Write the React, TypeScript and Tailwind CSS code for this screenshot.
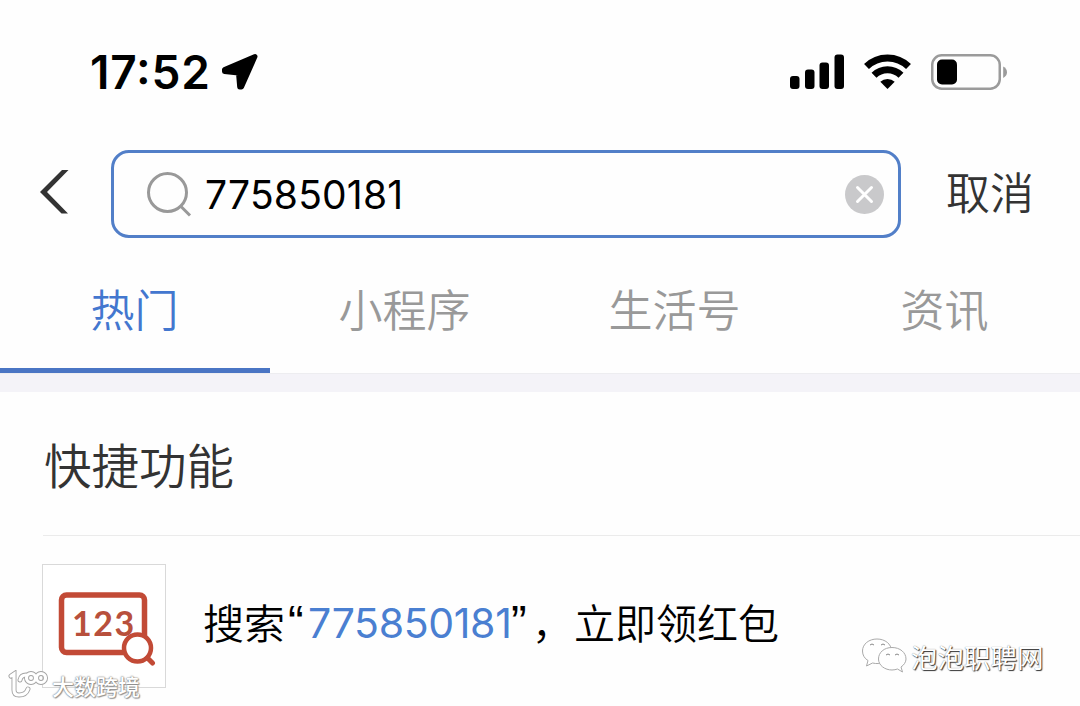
import { useState } from "react";

const TABS = ["热门", "小程序", "生活号", "资讯"];

const CJK = "font-['Noto_Sans_CJK_SC',sans-serif]";

function StatusBar() {
  return (
    <div className="flex h-[144px] items-center justify-between pl-[90px] pr-[73px]">
      <div className="flex items-center">
        <span className="w-[131px] whitespace-nowrap text-[46px] leading-none font-semibold tracking-[0.8px] text-black [font-feature-settings:'case']">17:52</span>
        <svg width="38" height="38" viewBox="0 0 38 38" className="text-black">
          <path
            d="M3.500 16.500 34 3.500 20.500 34H18.700L17.500 20 3.500 18.500Z"
            fill="currentColor" stroke="currentColor" strokeWidth="5" strokeLinejoin="round"
          />
        </svg>
      </div>
      <div className="flex items-center">
        <svg width="54" height="36" viewBox="0 0 54 36" fill="#000" className="mr-[20px]">
          <rect x="0" y="22" width="9.500" height="13" rx="3" />
          <rect x="15" y="15.500" width="9.500" height="19.500" rx="3" />
          <rect x="29.500" y="8.500" width="9.500" height="26.500" rx="3" />
          <rect x="44.500" y="0.500" width="9.500" height="34.500" rx="3" />
        </svg>
        <svg width="47" height="36" viewBox="0 0 47 36" fill="none" stroke="#000" strokeWidth="7" className="mr-[20px]">
          <path d="M2.500 12.500A30 30 0 0 1 44.500 12.500" />
          <path d="M10 21.300A19.200 19.200 0 0 1 37 21.300" />
          <path d="M16.300 27.800A10.500 10.500 0 0 1 30.700 27.800L23.500 35Z" fill="#000" stroke="none" />
        </svg>
        <svg width="76" height="36" viewBox="0 0 76 36">
          <rect x="1.250" y="1.250" width="67.500" height="33.500" rx="9.500" fill="none" stroke="#9b9b9b" strokeWidth="2.500" />
          <rect x="6" y="5.500" width="20" height="25" rx="5" fill="#000" />
          <path d="M72.200 12.500Q76 14.500 76 18.300Q76 22 72.200 24Z" fill="#9b9b9b" />
        </svg>
      </div>
    </div>
  );
}

function SearchBar({ value, onChange }: { value: string; onChange: (v: string) => void }) {
  return (
    <div className="flex h-[100px] items-center">
      <button className="mb-[5px] ml-[40px] mr-[42px] shrink-0" aria-label="返回">
        <svg width="29" height="44" viewBox="0 0 29 44" fill="#333">
          <path d="M0 22 22 0H28.500L7 22 28 43.500H21.500Z" />
        </svg>
      </button>
      <label className="flex h-[88px] w-[790px] shrink-0 items-center rounded-[18px] border-[3px] border-[#527fc8] pl-[31px] pr-[14px]">
        <svg width="48" height="48" viewBox="0 0 48 48" fill="none" stroke="#999" strokeWidth="3" className="mr-[12px] shrink-0">
          <circle cx="22.500" cy="22.500" r="19" />
          <path d="M35.500 36 45 45.500" />
        </svg>
        <input
          value={value}
          onChange={(e) => onChange(e.target.value)}
          className="min-w-0 flex-1 text-[39px] leading-none tracking-[0.2px] text-black outline-none"
        />
        <button onClick={() => onChange("")} className="shrink-0" aria-label="清除">
          <svg width="39" height="39" viewBox="0 0 39 39">
            <circle cx="19.500" cy="19.500" r="19.500" fill="#c9c9cb" />
            <path d="M12.500 12.500 26.500 26.500M26.500 12.500 12.500 26.500" stroke="#fff" strokeWidth="3" strokeLinecap="round" />
          </svg>
        </button>
      </label>
      <button className={`${CJK} mb-[6px] ml-[45px] shrink-0 text-[44px] leading-none font-[350] text-[#333]`}>取消</button>
    </div>
  );
}

function NumberSearchIcon() {
  return (
    <svg width="98" height="78" viewBox="0 0 98 78" fill="none" stroke="#c24a36">
      <rect x="3.500" y="7" width="83" height="57.500" rx="5" strokeWidth="5.500" />
      <text x="14" y="48" fill="#b8503c" stroke="none" fontSize="34" fontWeight="700" letterSpacing="1.500" fontFamily="Lato, sans-serif">123</text>
      <circle cx="79.500" cy="60" r="13.500" fill="#fff" strokeWidth="4.500" />
      <path d="M89.500 70 94.500 75" strokeWidth="5" strokeLinecap="round" />
    </svg>
  );
}

export default function App() {
  const [query, setQuery] = useState("775850181");
  const [active, setActive] = useState(0);

  return (
    <div className="relative h-[706px] w-[1080px] overflow-hidden bg-[#fefefe] font-[Inter,'Noto_Sans_CJK_SC',sans-serif]">
      <StatusBar />
      <SearchBar value={query} onChange={setQuery} />

      <div className="flex h-[129px]">
        {TABS.map((tab, i) => (
          <button
            key={tab}
            onClick={() => setActive(i)}
            className={`${CJK} flex-1 border-b-[5px] pt-[3px] pr-px text-[44px] leading-none font-[350] ${
              i === active ? "border-[#4a75c4] text-[#4377cf]" : "border-transparent text-[#999]"
            }`}
          >
            {tab}
          </button>
        ))}
      </div>
      <div className="h-[19px] border-t border-[#ededf0] bg-[#f4f3f8]" />

      <h2 className={`${CJK} flex h-[143px] items-center pl-[44px] text-[47.5px] leading-none font-[350] text-[#333]`}>快捷功能</h2>
      <div className="ml-[43px] h-px bg-[#ebebeb]" />

      <div className="flex pl-[42px] pt-[28px]">
        <div className="flex h-[124px] w-[124px] items-center justify-center border border-[#d9d9d9] bg-white pt-[2px] pl-[5px]">
          <NumberSearchIcon />
        </div>
        <p className={`${CJK} ml-[37px] flex h-[115px] items-center whitespace-nowrap text-[41px] leading-none font-[350] text-black`}>
          <span className="w-[85px]">搜索</span>
          <span className="w-[20px] font-['Liberation_Sans'] text-[47px]">“</span>
          <span className="w-[203px] pt-[3px] font-[Inter] text-[41px] font-normal tracking-[-0.35px] text-[#4a7fd1]">{query}</span>
          <span className="w-[21px] font-['Liberation_Sans'] text-[47px]">”</span>
          <span className="w-[42px]">，</span>
          <span>立即领红包</span>
        </p>
      </div>

      {/* watermarks */}
      <div className="absolute left-[861px] top-[637px] flex items-center">
        <svg width="46" height="40" viewBox="0 0 46 40" fill="#fff" stroke="#aaa" strokeWidth="1">
          <path d="M16 2C8 2 1.500 7 1.500 14c0 4 2 7.500 5.500 9.500L5.500 29l6-3c8 2 19-1 19-12C30.500 7 24 2 16 2Z" />
          <path d="M31 10.500c-8 0-13.500 5-13.500 11.500S24 33 31 33c2 0 4-.5 5.500-1l5 3-1.500-5c3-2 5-5 5-8 0-6.500-6-11.500-14-11.500Z" />
          <path d="M9 8q2-2 4 0M20 8q2-2 4 0M25 18q2-2 4 0M34 18q2-2 4 0" fill="none" stroke="#888" />
        </svg>
        <span className={`${CJK} ml-[4px] text-[26.5px] leading-none text-white [text-shadow:1px_1px_1px_#333,0_0_1px_#777]`}>泡泡职聘网</span>
      </div>
      <div className="absolute left-[8px] top-[670px] flex items-center">
        <svg width="42" height="30" viewBox="0 0 42 30" fill="none" strokeLinecap="round">
          <g stroke="#a3a3a3" strokeWidth="5">
            <path d="M3 6 6 4V20Q6 25 11 25Q18 25 20 19M12 10Q13 5 18 5" />
            <circle cx="23" cy="8" r="4.500" />
            <circle cx="33" cy="8" r="4.500" />
          </g>
          <g stroke="#fff" strokeWidth="3.200">
            <path d="M3 6 6 4V20Q6 25 11 25Q18 25 20 19M12 10Q13 5 18 5" />
            <circle cx="23" cy="8" r="4.500" />
            <circle cx="33" cy="8" r="4.500" />
          </g>
        </svg>
        <span className={`${CJK} ml-[2px] text-[22px] leading-none font-medium text-white [text-shadow:0_0_1px_#777,0_0_2px_#888,1px_1px_1px_#999]`}>大数跨境</span>
      </div>
    </div>
  );
}
